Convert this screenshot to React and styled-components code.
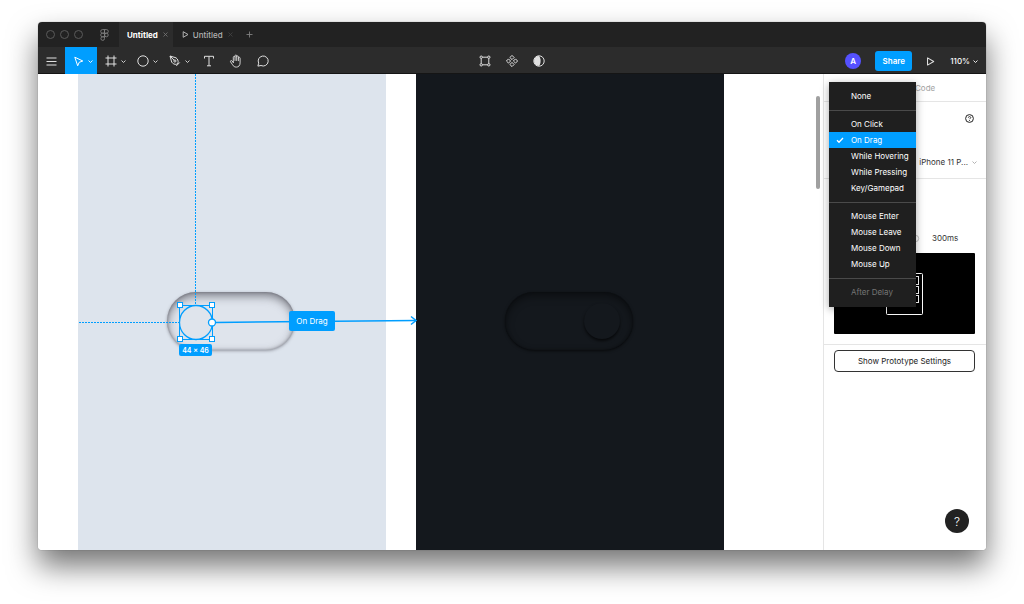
import React from 'react'
import styled, { createGlobalStyle } from 'styled-components'

const GlobalStyle = createGlobalStyle`
	:root {
		--c-blue-hl: #009eff;
		--c-title: #222222;
		--c-bar: #2c2c2c;
		--c-menu: #1f1f1f;
		--c-line: #e5e5e5;
		--font: Inter, "Liberation Sans", sans-serif;
	}
	* {
		box-sizing: border-box;
	}
	body {
		margin: 0;
		background: #fff;
		font-family: var(--font);
		font-size: 8px;
		color: #333;
	}
	button {
		font: inherit;
		color: inherit;
		border: 0;
		padding: 0;
		margin: 0;
		background: none;
		cursor: pointer;
	}
	svg {
		display: block;
		fill: none;
	}
`

const Desktop = styled.div`
	min-height: 100vh;
	padding: 22px 38px 54px;
	display: flex;
	overflow: hidden;
`

const Window = styled.div`
	flex: 1;
	min-width: 0;
	display: flex;
	flex-direction: column;
	border-radius: 4px;
	overflow: hidden;
	box-shadow: 0 0 1px rgba(0, 0, 0, 0.5), 0 16px 30px rgba(0, 0, 0, 0.55);
`

const TitleBar = styled.header`
	height: 25px;
	display: flex;
	background: var(--c-title);
	color: #b3b3b3;
`

const Lights = styled.div`
	display: flex;
	align-items: center;
	gap: 5px;
	padding-left: 8px;
	width: 55px;
`

const Light = styled.span`
	width: 9px;
	height: 9px;
	border: 1px solid #5a5a5a;
	border-radius: 50%;
`

const HomeButton = styled.button`
	width: 23px;
	margin-right: 3px;
	display: flex;
	align-items: center;
	justify-content: center;
`

const Tab = styled.div`
	display: flex;
	align-items: center;
	gap: 5px;
	padding: ${({ $active }) => ($active ? '0 5px 0 8px' : '0 0 0 9px')};
	background: ${({ $active }) => ($active ? 'var(--c-bar)' : 'transparent')};
	color: ${({ $active }) => ($active ? '#fff' : '#b3b3b3')};
	font-weight: ${({ $active }) => ($active ? 700 : 500)};
`

const TabButton = styled.button`
	display: flex;
	align-items: center;
	gap: 4px;
`

const CloseButton = styled.button`
	display: flex;
	color: ${({ $dim }) => ($dim ? '#444' : '#777')};
`

const AddButton = styled.button`
	display: flex;
	align-items: center;
	padding: 0 13px;
	color: #808080;
`

const Toolbar = styled.nav`
	height: 27px;
	padding-top: 1px;
	display: grid;
	grid-template-columns: 1fr auto 1fr;
	background: var(--c-bar);
	color: #e0e0e0;
	box-shadow: inset 0 -1px #151515;
`

const Group = styled.div`
	display: flex;
	align-items: center;
	justify-content: ${({ $end }) => ($end ? 'flex-end' : 'flex-start')};
`

const Tool = styled.button`
	width: 27px;
	height: 26px;
	display: flex;
	align-items: center;
	justify-content: center;
`

/* a tool that opens a list of its variants */
const SplitTool = styled(Tool)`
	width: 32px;
	gap: 4px;
	padding-left: 4px;
	color: ${({ $active }) => ($active ? '#fff' : 'inherit')};
	background: ${({ $active }) => ($active ? 'var(--c-blue-hl)' : 'transparent')};
	box-shadow: ${({ $active }) => ($active ? '0 -1px var(--c-blue-hl)' : 'none')};
`

const TextTools = styled.div`
	display: flex;
	padding-left: 2px;
`

const Avatar = styled.span`
	width: 16px;
	height: 16px;
	display: flex;
	align-items: center;
	justify-content: center;
	border-radius: 50%;
	background: #5551ff;
	color: #fff;
	font-weight: 600;
`

const ShareButton = styled.button`
	width: 37px;
	height: 20px;
	margin: 0 5px 0 14px;
	border-radius: 3px;
	background: var(--c-blue-hl);
	color: #fff;
	font-weight: 600;
`

const ZoomButton = styled.button`
	display: flex;
	align-items: center;
	gap: 3px;
	padding: 0 8px 0 6px;
	font-weight: 500;
	color: #fff;
`

const Body = styled.div`
	flex: 1;
	display: flex;
	min-height: 0;
	background: #fff;
`

const Canvas = styled.main`
	position: relative;
	flex: 1;
	min-width: 0;
	display: flex;
	gap: 30px;
	padding-left: 40px;
	overflow: hidden;
`

const Frame = styled.section`
	position: relative;
	flex: 0 0 308px;
	background: ${({ $dark }) => ($dark ? '#14181d' : '#dde4ed')};
`

/* nodes live at free positions inside their frame */
const Pill = styled.div`
	position: absolute;
	left: 89px;
	top: 218px;
	width: 128px;
	height: 58px;
	border-radius: 29px;
	background: ${({ $dark }) => ($dark ? '#14181d' : '#dfe4ec')};
	box-shadow: ${({ $dark }) =>
		$dark
			? 'inset 0 4px 8px rgba(0, 0, 0, 0.4), inset 0 0 3px rgba(0, 0, 0, 0.3), 0 1px 3px rgba(0, 0, 0, 0.6)'
			: 'inset 0 4px 10px rgba(70, 70, 80, 0.65), inset 0 0 3px rgba(70, 70, 80, 0.5), 0 1px 3px rgba(80, 80, 90, 0.5)'};
`

const Knob = styled.div`
	position: absolute;
	left: 79px;
	top: 11px;
	width: 36px;
	height: 36px;
	border-radius: 50%;
	background: #14181d;
	box-shadow: 0 2px 3px rgba(0, 0, 0, 0.65);
`

const Overlay = styled.svg`
	position: absolute;
	left: 0;
	top: 0;
	width: 100%;
	height: 100%;
	stroke: var(--c-blue-hl);
`

const NodeLabel = styled.span`
	position: absolute;
	left: 251px;
	top: 237px;
	width: 46px;
	height: 20px;
	display: flex;
	align-items: center;
	justify-content: center;
	border-radius: 2px;
	background: var(--c-blue-hl);
	color: #fff;
	white-space: nowrap;
`

const SizeLabel = styled(NodeLabel)`
	left: 141px;
	top: 270px;
	width: 33px;
	height: 12px;
	font-size: 7px;
	font-weight: 600;
`

const ScrollThumb = styled.span`
	position: absolute;
	right: 3px;
	top: 22px;
	width: 4px;
	height: 93px;
	border-radius: 2px;
	background: #a0a0a0;
`

const Panel = styled.aside`
	position: relative;
	flex: 0 0 163px;
	display: flex;
	flex-direction: column;
	border-left: 1px solid var(--c-line);
	background: #fff;
`

const PanelTabs = styled.div`
	height: 28px;
	display: flex;
	align-items: center;
	padding-left: 91px;
	border-bottom: 1px solid var(--c-line);
	color: #a3a3a3;
`

const Section = styled.section`
	display: flex;
	flex-direction: column;
	padding: 10px 11px 10px 10px;
	border-bottom: 1px solid var(--c-line);
`

const DeviceSection = styled(Section)`
	height: 77px;
	padding-top: 12px;
	justify-content: space-between;
	align-items: flex-end;
`

const HelpDot = styled.button`
	margin-right: 1px;
	display: flex;
	color: #222;
`

const DeviceButton = styled.button`
	display: flex;
	align-items: center;
	gap: 4px;
	margin-right: -2px;
	height: 12px;
	svg {
		color: #aaa;
	}
`

const AnimationSection = styled(Section)`
	padding-top: 53px;
`

const Duration = styled.div`
	display: flex;
	align-items: center;
	gap: 12px;
	height: 12px;
	padding-left: 77px;
`

const Preview = styled.div`
	height: 81px;
	margin-top: 9px;
	display: flex;
	align-items: center;
	justify-content: center;
	border-radius: 1px;
	background: #000;
`

const SettingsButton = styled.button`
	height: 22px;
	margin: 5px 11px 5px 10px;
	border: 1px solid #333;
	border-radius: 4px;
	color: #222;
`

const HelpButton = styled.button`
	width: 24px;
	height: 24px;
	margin: auto 17px 17px auto;
	border-radius: 50%;
	background: #222;
	color: #fff;
	font-size: 12px;
	font-weight: 300;
`

const Menu = styled.div`
	position: absolute;
	left: 5px;
	top: 8px;
	width: 87px;
	padding: 6px 0 7px;
	background: var(--c-menu);
	box-shadow: 0 2px 8px rgba(0, 0, 0, 0.35);
`

const MenuItem = styled.button`
	width: 100%;
	height: 16px;
	display: flex;
	align-items: center;
	color: ${({ disabled }) => (disabled ? '#757575' : '#fff')};
	background: ${({ $checked }) => ($checked ? 'var(--c-blue-hl)' : 'transparent')};
	white-space: nowrap;
`

const CheckSlot = styled.span`
	flex: 0 0 22px;
	padding-left: 7px;
`

const Divider = styled.hr`
	margin: 6px 0 5px;
	border: 0;
	height: 1px;
	background: #4a4a4a;
`

const Icon = ({ size = 14, children, ...props }) => (
	<svg width={size} height={size} viewBox={`0 0 ${size} ${size}`} stroke="currentColor" {...props}>
		{children}
	</svg>
)

const Chevron = () => (
	<Icon size={5}>
		<path d="M.5 1.5l2 2 2-2" strokeWidth=".9" />
	</Icon>
)

const Cross = () => (
	<Icon size={5}>
		<path d="M.5 .5l4 4M4.5 .5l-4 4" strokeWidth=".8" />
	</Icon>
)

const Play = ({ size = 7, weight = 1 }) => (
	<svg width={size} height={size} viewBox="0 0 7 7" stroke="currentColor" strokeWidth={weight}>
		<path d="M1.2 .7v5.6L6 3.5z" strokeLinejoin="round" />
	</svg>
)

const FigmaIcon = () => (
	<svg width="9" height="12" viewBox="0 0 9 12" stroke="#808080" strokeWidth=".9">
		<path d="M4.5 .6h-2a1.8 1.8 0 0 0 0 3.6h2zM4.5 .6h2a1.8 1.8 0 0 1 0 3.6h-2zM4.5 4.2h-2a1.8 1.8 0 0 0 0 3.6h2zM4.5 7.8h-2a1.8 1.8 0 1 0 2 1.8z" />
		<circle cx="6.4" cy="6" r="1.8" />
	</svg>
)

const MenuIcon = () => (
	<Icon size={11}>
		<path d="M.5 2h10M.5 5.500h10M.5 9h10" />
	</Icon>
)

const MoveIcon = () => (
	<Icon size={11}>
		<path d="M1.8 1.2l8 3.8-3.6 1.3-1.500 3.500z" strokeLinejoin="round" />
	</Icon>
)

const FrameIcon = () => (
	<Icon size={12}>
		<path d="M3 .5v11M9 .5v11M.5 3h11M.5 9h11" />
	</Icon>
)

const EllipseIcon = () => (
	<Icon size={12}>
		<circle cx="6" cy="6" r="5.2" />
	</Icon>
)

const PenIcon = () => (
	<Icon size={12}>
		<path
			d="M1 1l6 1.8c1.700 1.200 2.500 3 2 5L7.600 9.300c-2 .3-3.800-.5-4.900-2.200zM1 1l4.200 4.300M7.300 10.900l3.400-3.400"
			strokeLinejoin="round"
		/>
		<circle cx="5.9" cy="6" r="1.100" />
	</Icon>
)

const TextIcon = () => (
	<Icon size={12}>
		<path d="M1.5 3.500V1.300h9v2.200M6 1.300v9.500M4 10.800h4" />
	</Icon>
)

const HandIcon = () => (
	<Icon size={14}>
		<path
			d="M4.300 8.500V3.300c0-1.200 1.700-1.200 1.700 0V6.500M6 3V1.900c0-1.200 1.700-1.200 1.700 0V6.500M7.700 2.700c0-1.200 1.700-1.200 1.700 0v4M9.400 4.200c0-1.200 1.700-1.200 1.700 0V8.900c0 2.600-1.600 4.200-3.700 4.200-2 0-2.900-.8-3.800-2.300L1.600 7.900c-.6-1.100.7-1.900 1.500-.9l1.200 1.500"
			strokeWidth=".9"
			strokeLinecap="round"
		/>
	</Icon>
)

const CommentIcon = () => (
	<Icon size={12}>
		<path d="M.9 11.100l.8-2.900a5 5 0 1 1 2.300 2.300z" strokeLinejoin="round" />
	</Icon>
)

const EditIcon = () => (
	<Icon size={12}>
		<path d="M3.400 2.200h5.200M3.400 9.800h5.200M2.200 3.400v5.200M9.800 3.400v5.200" />
		<circle cx="2.2" cy="2.2" r="1.2" />
		<circle cx="9.8" cy="2.2" r="1.2" />
		<circle cx="2.2" cy="9.8" r="1.2" />
		<circle cx="9.8" cy="9.8" r="1.2" />
	</Icon>
)

const ComponentIcon = () => (
	<Icon size={12}>
		<path
			d="M6 .4l2.100 2.100L6 4.600 3.900 2.500zM6 7.400l2.100 2.100L6 11.600 3.900 9.500zM2.500 3.900L4.600 6 2.500 8.100.4 6zM9.500 3.900L11.600 6 9.500 8.100 7.400 6z"
			strokeLinejoin="round"
		/>
	</Icon>
)

const MaskIcon = () => (
	<Icon size={12}>
		<circle cx="6" cy="6" r="5.2" />
		<path d="M6 1a5 5 0 0 0 0 10c1.100-1.300 1.600-3 1.600-5S7.100 2.300 6 1z" fill="currentColor" stroke="none" />
	</Icon>
)

const HelpIcon = () => (
	<Icon size={9}>
		<circle cx="4.5" cy="4.5" r="3.9" />
		<path d="M3.300 3.700c0-1.500 2.500-1.500 2.500 0 0 .8-1.300.8-1.300 1.500M4.500 6v.9" strokeWidth=".9" />
	</Icon>
)

const TimerIcon = () => (
	<Icon size={9} color="#b3b3b3">
		<circle cx="4.5" cy="4.5" r="3.2" strokeWidth=".8" />
		<path d="M4.500 5V3" strokeWidth=".8" />
	</Icon>
)

const CheckIcon = () => (
	<Icon size={8}>
		<path d="M1 4.200l2 2L7 2" strokeWidth="1.3" />
	</Icon>
)

const PreviewIcon = () => (
	<svg width="37" height="42" viewBox="0 0 37 42" stroke="#fff">
		<rect x=".5" y=".5" width="36" height="41" rx="1" />
		<rect x="5.5" y="3.5" width="27" height="8" />
		<rect x="5.5" y="13.5" width="27" height="7" />
		<rect x="5.5" y="22.5" width="27" height="7" />
	</svg>
)

const handles = [
	[142, 231],
	[174, 231],
	[142, 265],
	[174, 265],
]

const Selection = () => (
	<Overlay>
		<path d="M157.500 0V231" strokeDasharray="2 1" />
		<path d="M41 248.500H141" strokeDasharray="2 1" />
		<rect x="141.5" y="231.5" width="33" height="34" />
		<ellipse cx="158" cy="248.5" rx="16.5" ry="17" fill="#dfe4ec" strokeWidth="1.3" />
		<path d="M177 248.500L378 246.500" strokeWidth="1.5" />
		<path d="M373 242.500l5 4-5 4" strokeWidth="1.5" />
		{handles.map(([x, y]) => (
			<rect key={`${x}-${y}`} x={x - 2.5} y={y - 2.5} width="5" height="5" fill="#fff" />
		))}
		<circle cx="174" cy="248.5" r="3.5" fill="#fff" strokeWidth="1.3" />
	</Overlay>
)

const triggers = [
	['None'],
	['On Click', 'On Drag', 'While Hovering', 'While Pressing', 'Key/Gamepad'],
	['Mouse Enter', 'Mouse Leave', 'Mouse Down', 'Mouse Up'],
	['After Delay'],
]

const TriggerMenu = ({ selected }) => (
	<Menu role="menu">
		{triggers.map((group, i) => (
			<React.Fragment key={group[0]}>
				{i > 0 && <Divider />}
				{group.map(name => (
					<MenuItem
						key={name}
						role="menuitemradio"
						aria-checked={name === selected}
						$checked={name === selected}
						disabled={name === 'After Delay'}
					>
						<CheckSlot>{name === selected && <CheckIcon />}</CheckSlot>
						{name}
					</MenuItem>
				))}
			</React.Fragment>
		))}
	</Menu>
)

const App = () => (
	<>
		<GlobalStyle />
		<Desktop>
			<Window>
				<TitleBar>
					<Lights>
						<Light />
						<Light />
						<Light />
					</Lights>
					<HomeButton aria-label="Home">
						<FigmaIcon />
					</HomeButton>
					<Tab $active>
						<TabButton>Untitled</TabButton>
						<CloseButton aria-label="Close tab">
							<Cross />
						</CloseButton>
					</Tab>
					<Tab>
						<TabButton>
							<Play />
							Untitled
						</TabButton>
						<CloseButton $dim aria-label="Close tab">
							<Cross />
						</CloseButton>
					</Tab>
					<AddButton aria-label="New tab">
						<Icon size={7}>
							<path d="M3.500 .5v6M.5 3.500h6" strokeWidth=".9" />
						</Icon>
					</AddButton>
				</TitleBar>
				<Toolbar>
					<Group>
						<Tool aria-label="Menu">
							<MenuIcon />
						</Tool>
						<SplitTool $active aria-label="Move">
							<MoveIcon />
							<Chevron />
						</SplitTool>
						<SplitTool aria-label="Frame">
							<FrameIcon />
							<Chevron />
						</SplitTool>
						<SplitTool aria-label="Ellipse">
							<EllipseIcon />
							<Chevron />
						</SplitTool>
						<SplitTool aria-label="Pen">
							<PenIcon />
							<Chevron />
						</SplitTool>
						<TextTools>
							<Tool aria-label="Text">
								<TextIcon />
							</Tool>
							<Tool aria-label="Hand">
								<HandIcon />
							</Tool>
							<Tool aria-label="Comment">
								<CommentIcon />
							</Tool>
						</TextTools>
					</Group>
					<Group>
						<Tool aria-label="Edit object">
							<EditIcon />
						</Tool>
						<Tool aria-label="Create component">
							<ComponentIcon />
						</Tool>
						<Tool aria-label="Use as mask">
							<MaskIcon />
						</Tool>
					</Group>
					<Group $end>
						<Avatar>A</Avatar>
						<ShareButton>Share</ShareButton>
						<Tool aria-label="Present">
							<Play size={9} weight={0.8} />
						</Tool>
						<ZoomButton>
							110%
							<Chevron />
						</ZoomButton>
					</Group>
				</Toolbar>
				<Body>
					<Canvas>
						<Frame>
							<Pill />
						</Frame>
						<Frame $dark>
							<Pill $dark>
								<Knob />
							</Pill>
						</Frame>
						<Selection />
						<NodeLabel>On Drag</NodeLabel>
						<SizeLabel>44 × 46</SizeLabel>
						<ScrollThumb />
					</Canvas>
					<Panel>
						<PanelTabs>Code</PanelTabs>
						<DeviceSection>
							<HelpDot aria-label="Interaction help">
								<HelpIcon />
							</HelpDot>
							<DeviceButton>
								iPhone 11 P...
								<Chevron />
							</DeviceButton>
						</DeviceSection>
						<AnimationSection>
							<Duration>
								<TimerIcon />
								300ms
							</Duration>
							<Preview>
								<PreviewIcon />
							</Preview>
						</AnimationSection>
						<SettingsButton>Show Prototype Settings</SettingsButton>
						<HelpButton aria-label="Help">?</HelpButton>
						<TriggerMenu selected="On Drag" />
					</Panel>
				</Body>
			</Window>
		</Desktop>
	</>
)

export default App
